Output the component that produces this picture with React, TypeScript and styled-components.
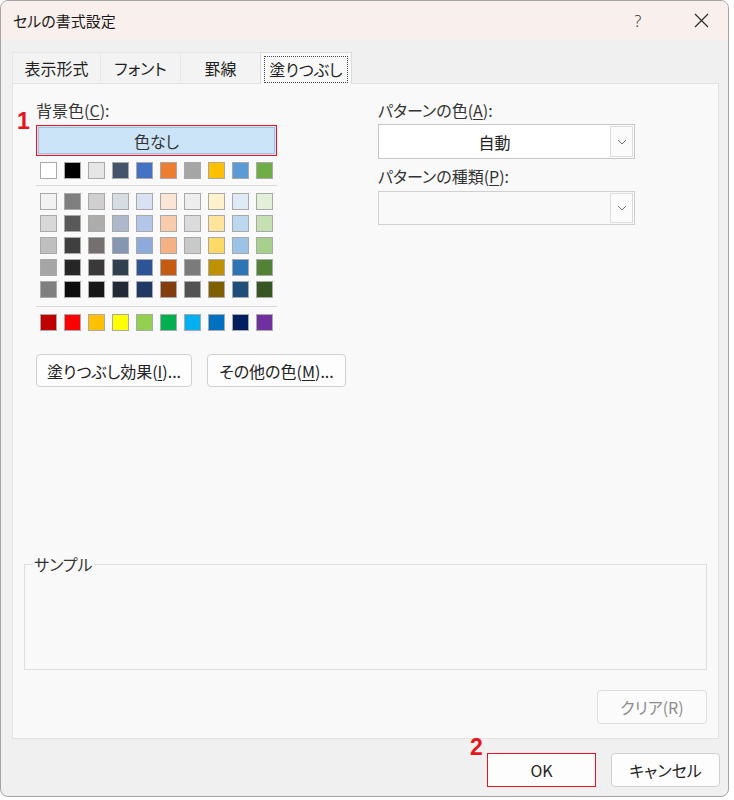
import React from "react";
import styled, { createGlobalStyle } from "styled-components";

const GlobalStyle = createGlobalStyle`
  html, body { margin: 0; padding: 0; background: #ffffff; }
  body {
    font-family: "Noto Sans CJK JP", "Noto Sans", sans-serif;
    font-feature-settings: "palt";
    color: #1f1f1f;
  }
  *, *::before, *::after { box-sizing: border-box; }
`;

const Window = styled.div`
  width: 729px;
  height: 797px;
  background: #f0f0f0;
  border: 1px solid #a5a5a5;
  border-radius: 8px;
  overflow: hidden;
  display: flex;
  flex-direction: column;
`;

const TitleBar = styled.div`
  height: 39px;
  flex: none;
  background: #f9efec;
  display: flex;
  align-items: center;
  padding-left: 12px;
`;

const Title = styled.div`
  font-size: 15px;
  color: #1a1a1a;
`;

const TitleControls = styled.div`
  margin-left: auto;
  margin-right: 12px;
  display: flex;
  align-items: center;
  gap: 33px;
`;

const TitleButton = styled.div`
  width: 30px;
  height: 30px;
  display: flex;
  align-items: center;
  justify-content: center;
  font-family: "Noto Sans", sans-serif;
  font-weight: 300;
  font-size: 16px;
  color: #333;
`;

const TabBar = styled.div`
  display: flex;
  margin: 12px 0 0 11px;
  height: 31px;
  align-items: flex-end;
  position: relative;
  z-index: 1;
`;

const Tab = styled.div<{ $w: number; $active?: boolean }>`
  width: ${(p) => p.$w}px;
  height: ${(p) => (p.$active ? 32 : 31)}px;
  margin-bottom: ${(p) => (p.$active ? -1 : 0)}px;
  margin-left: -1px;
  display: flex;
  align-items: stretch;
  justify-content: center;
  padding: ${(p) => (p.$active ? "3px 3px 1px 3px" : "0")};
  background: ${(p) => (p.$active ? "#f9f9f9" : "#f3f3f3")};
  border: 1px solid ${(p) => (p.$active ? "#dcdcdc" : "#e6e6e6")};
  border-bottom: none;
  font-size: 16px;
  color: #1f1f1f;
  &:first-child { margin-left: 0; }
`;

const TabLabel = styled.div<{ $focus?: boolean }>`
  flex: 1;
  display: flex;
  align-items: center;
  justify-content: center;
  border: 1px dotted ${(p) => (p.$focus ? "#444" : "transparent")};
  padding-bottom: 1px;
`;

const Panel = styled.div`
  margin-left: 11px;
  width: 707px;
  height: 656px;
  flex: none;
  background: #f9f9f9;
  border: 1px solid #e1e1e1;
  display: flex;
  flex-direction: column;
  padding: 16px 11px 14px 11px;
`;

const TopSection = styled.div`
  display: grid;
  grid-template-columns: 241px 257px;
  column-gap: 101px;
  padding-left: 12px;
  align-items: start;
`;

const Column = styled.div`
  position: relative;
  display: flex;
  flex-direction: column;
`;

const Label = styled.div`
  font-size: 16px;
  line-height: 20px;
  color: #333;
  white-space: nowrap;
`;

const Acc = styled.span`
  text-decoration: underline;
  text-underline-offset: 2px;
  text-decoration-thickness: 1px;
`;

const Marker = styled.div`
  position: absolute;
  font-family: "Liberation Sans", Arial, sans-serif;
  font-weight: 700;
  font-size: 23px;
  line-height: 1;
  color: #e8141c;
`;

const NoColorFrame = styled.div`
  margin-top: 5px;
  height: 31px;
  border: 1px solid #e5151f;
  padding: 1px;
  background: #cce4f7;
  display: flex;
`;

const NoColorInner = styled.div`
  flex: 1;
  border: 1px solid #a9bed3;
  display: flex;
  align-items: center;
  justify-content: center;
  font-size: 16px;
  color: #333;
`;

const SwatchRow = styled.div<{ $mt: number }>`
  margin-top: ${(p) => p.$mt}px;
  padding-left: 4px;
  display: grid;
  grid-template-columns: repeat(10, 17px);
  column-gap: 7px;
  row-gap: 5px;
`;

const Swatch = styled.div`
  width: 17px;
  height: 17px;
  border: 1px solid #a9a9a9;
`;

const Separator = styled.div<{ $mt: number }>`
  margin-top: ${(p) => p.$mt}px;
  height: 1px;
  background: #d9d9d9;
`;

const ButtonRow = styled.div`
  margin-top: 23px;
  display: flex;
  gap: 15px;
`;

const PushButton = styled.div<{ $w: number; $h?: number; $disabled?: boolean; $focus?: boolean }>`
  width: ${(p) => p.$w}px;
  height: ${(p) => p.$h ?? 33}px;
  flex: none;
  display: flex;
  align-items: center;
  justify-content: center;
  font-size: 16px;
  white-space: nowrap;
  color: ${(p) => (p.$disabled ? "#8c8c8c" : "#222")};
  background: ${(p) => (p.$disabled ? "#fbfbfb" : "#fdfdfd")};
  border: 1px solid ${(p) => (p.$focus ? "#e5151f" : p.$disabled ? "#dedede" : "#d0d0d0")};
  border-radius: ${(p) => (p.$focus ? 0 : 4)}px;
  position: relative;
`;

const Select = styled.div<{ $mt: number; $h: number; $disabled?: boolean }>`
  margin-top: ${(p) => p.$mt}px;
  height: ${(p) => p.$h}px;
  border: 1px solid ${(p) => (p.$disabled ? "#d0d0d0" : "#c6c6c6")};
  background: ${(p) => (p.$disabled ? "#f9f9f9" : "#ffffff")};
  display: flex;
  padding: 1px 1px 1px 0;
`;

const SelectValue = styled.div`
  flex: 1;
  display: flex;
  align-items: center;
  justify-content: center;
  font-size: 16px;
  color: #222;
`;

const DropButton = styled.div`
  width: 23px;
  border: 1px solid #dcdcdc;
  background: #fbfbfb;
  display: flex;
  align-items: center;
  justify-content: center;
`;

const SampleBox = styled.fieldset`
  margin: auto 0 0 0;
  padding: 0;
  border: 1px solid #dedede;
  min-width: 0;
`;

const SampleLegend = styled.legend`
  margin-left: 8px;
  padding: 0 1px;
  font-size: 16px;
  line-height: 20px;
  color: #333;
`;

const SampleArea = styled.div`
  height: 95px;
`;

const ClearRow = styled.div`
  margin-top: 20px;
  display: flex;
  justify-content: flex-end;
`;

const Footer = styled.div`
  display: flex;
  justify-content: flex-end;
  gap: 15px;
  padding: 14px 8px 0 0;
`;

const themeRow = ["#ffffff", "#000000", "#e7e6e6", "#44546a", "#4472c4", "#ed7d31", "#a5a5a5", "#ffc000", "#5b9bd5", "#70ad47"];
const tintRows = [
  ["#f2f2f2", "#7f7f7f", "#d0cece", "#d6dce4", "#d9e2f3", "#fbe5d5", "#ededed", "#fff2cc", "#deebf6", "#e2efd9"],
  ["#d8d8d8", "#595959", "#aeabab", "#adb9ca", "#b4c6e7", "#f7cbac", "#dbdbdb", "#fee599", "#bdd7ee", "#c5e0b3"],
  ["#bfbfbf", "#3f3f3f", "#757070", "#8496b0", "#8eaadb", "#f4b183", "#c9c9c9", "#ffd965", "#9cc3e5", "#a8d08d"],
  ["#a5a5a5", "#262626", "#3a3838", "#323f4f", "#2f5496", "#c55a11", "#7b7b7b", "#bf9000", "#2e75b5", "#538135"],
  ["#7f7f7f", "#0c0c0c", "#171616", "#222a35", "#1f3864", "#833c0b", "#525252", "#7f6000", "#1e4e79", "#375623"],
];
const standardRow = ["#c00000", "#ff0000", "#ffc000", "#ffff00", "#92d050", "#00b050", "#00b0f0", "#0070c0", "#002060", "#7030a0"];

const Chevron = () => (
  <svg width="10" height="6" viewBox="0 0 10 6">
    <path d="M1 1 L5 5 L9 1" fill="none" stroke="#707070" strokeWidth="1" />
  </svg>
);

const CloseIcon = () => (
  <svg width="15" height="15" viewBox="0 0 15 15">
    <path d="M1 1 L14 14 M14 1 L1 14" stroke="#2a2a2a" strokeWidth="1.2" />
  </svg>
);

const tabs = [
  { label: "表示形式", w: 89 },
  { label: "フォント", w: 81 },
  { label: "罫線", w: 81 },
  { label: "塗りつぶし", w: 92, active: true },
];

export default function App() {
  return (
    <>
      <GlobalStyle />
      <Window>
        <TitleBar>
          <Title>セルの書式設定</Title>
          <TitleControls>
            <TitleButton>?</TitleButton>
            <TitleButton>
              <CloseIcon />
            </TitleButton>
          </TitleControls>
        </TitleBar>

        <TabBar>
          {tabs.map((t) => (
            <Tab key={t.label} $w={t.w} $active={t.active}>
              <TabLabel $focus={t.active}>{t.label}</TabLabel>
            </Tab>
          ))}
        </TabBar>

        <Panel>
          <TopSection>
            <Column>
              <Label>
                背景色(<Acc>C</Acc>):
              </Label>
              <Marker style={{ left: -19, top: 10 }}>1</Marker>
              <NoColorFrame>
                <NoColorInner>色なし</NoColorInner>
              </NoColorFrame>
              <SwatchRow $mt={6}>
                {themeRow.map((c, i) => (
                  <Swatch key={i} style={{ background: c }} />
                ))}
              </SwatchRow>
              <Separator $mt={6} />
              <SwatchRow $mt={7}>
                {tintRows.flat().map((c, i) => (
                  <Swatch key={i} style={{ background: c }} />
                ))}
              </SwatchRow>
              <Separator $mt={8} />
              <SwatchRow $mt={7}>
                {standardRow.map((c, i) => (
                  <Swatch key={i} style={{ background: c }} />
                ))}
              </SwatchRow>
              <ButtonRow>
                <PushButton $w={156}>
                  塗りつぶし効果(<Acc>I</Acc>)...
                </PushButton>
                <PushButton $w={139}>
                  その他の色(<Acc>M</Acc>)...
                </PushButton>
              </ButtonRow>
            </Column>

            <Column>
              <Label>
                パターンの色(<Acc>A</Acc>):
              </Label>
              <Select $mt={4} $h={35}>
                <SelectValue>自動</SelectValue>
                <DropButton>
                  <Chevron />
                </DropButton>
              </Select>
              <Label style={{ marginTop: 7 }}>
                パターンの種類(<Acc>P</Acc>):
              </Label>
              <Select $mt={5} $h={34} $disabled>
                <SelectValue />
                <DropButton>
                  <Chevron />
                </DropButton>
              </Select>
            </Column>
          </TopSection>

          <SampleBox>
            <SampleLegend>サンプル</SampleLegend>
            <SampleArea />
          </SampleBox>

          <ClearRow>
            <PushButton $w={110} $h={34} $disabled>
              クリア(R)
            </PushButton>
          </ClearRow>
        </Panel>

        <Footer>
          <PushButton $w={109} $h={34} $focus>
            <Marker style={{ left: -18, top: -18 }}>2</Marker>
            OK
          </PushButton>
          <PushButton $w={109} $h={34}>
            キャンセル
          </PushButton>
        </Footer>
      </Window>
    </>
  );
}
